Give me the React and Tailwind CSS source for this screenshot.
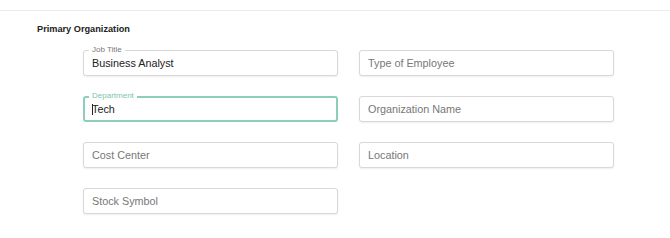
import React from "react";

const fields = [
  { label: "Job Title", value: "Business Analyst" },
  { placeholder: "Type of Employee" },
  { label: "Department", value: "Tech", focused: true },
  { placeholder: "Organization Name" },
  { placeholder: "Cost Center" },
  { placeholder: "Location" },
  { placeholder: "Stock Symbol" },
];

const Field = ({ label, value, placeholder, focused }) => {
  const border = focused
    ? "border-2 border-[#8ccdbb] px-[7px]"
    : "border border-[#d8d8d8] shadow-[0_1px_2px_rgba(0,0,0,0.07)] px-[8px]";
  return (
    <div
      className={`relative h-[26px] rounded-[3px] bg-white flex items-center ${border}`}
    >
      {label && (
        <span
          className={`absolute -top-[5px] px-[3px] bg-white text-[8px] leading-[8px] ${
            focused ? "left-[4px] -top-[6px] text-[#7cc5b0]" : "left-[5px] text-[#7a7a7a]"
          }`}
        >
          {label}
        </span>
      )}
      {value ? (
        <span className="flex items-center text-[10.8px] text-[#222]">
          {focused && <span className="w-px h-[11px] bg-[#222] -mr-px" />}
          {value}
        </span>
      ) : (
        <span className="text-[10.8px] text-[#777]">{placeholder}</span>
      )}
    </div>
  );
};

export default function App() {
  return (
    <div
      className="w-[670px] h-[238px] bg-white overflow-hidden"
      style={{ fontFamily: '"Liberation Sans", Arial, sans-serif' }}
    >
      <div className="pt-[10px]">
        <div className="border-t border-[#ebebeb] pt-[12px]">
          <h2 className="pl-[37px] text-[9.2px] leading-[12px] font-bold text-[#222]">
            Primary Organization
          </h2>
          <div className="mt-[15px] ml-[83px] grid grid-cols-[255px_255px] gap-x-[21px] gap-y-[20px]">
            {fields.map((f, i) => (
              <Field key={i} {...f} />
            ))}
          </div>
        </div>
      </div>
    </div>
  );
}
